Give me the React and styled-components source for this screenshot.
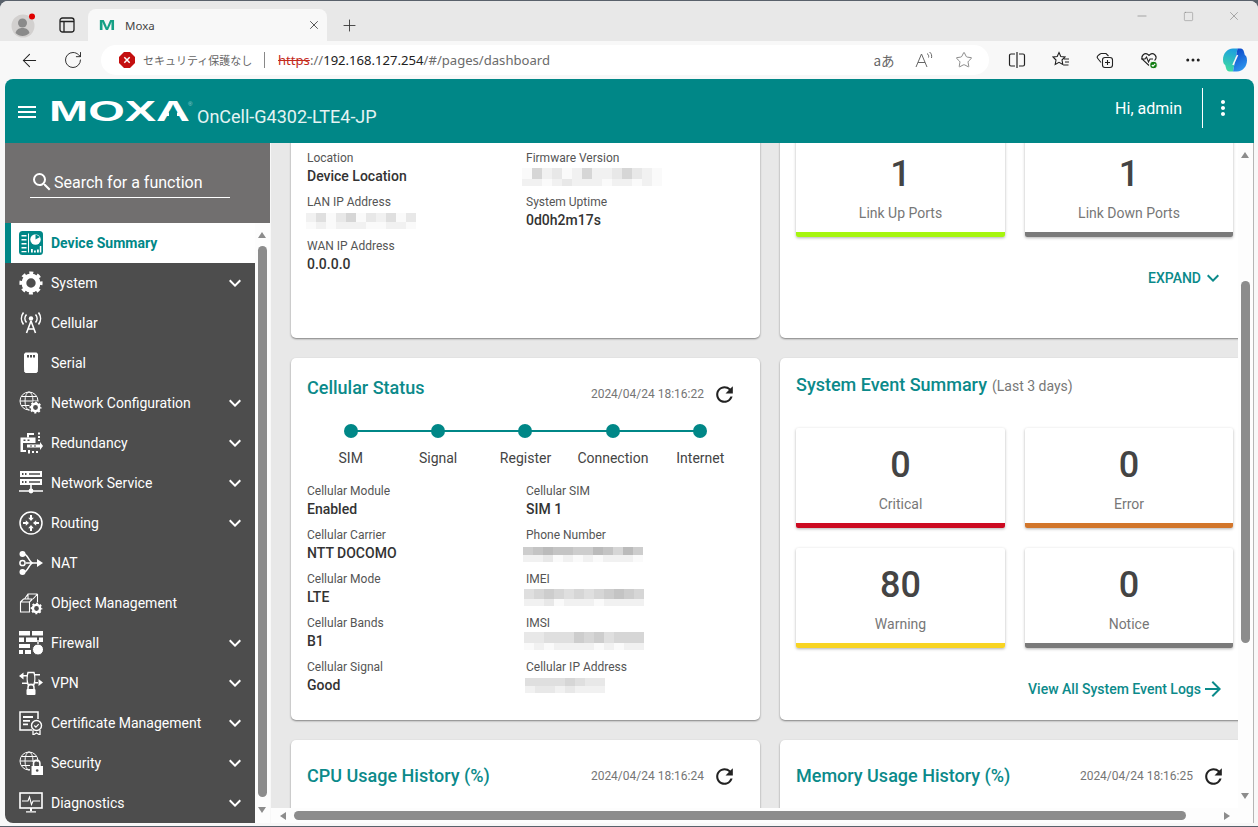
import React from 'react'
import styled, { createGlobalStyle } from 'styled-components'
import { ArrowLeft, RotateCw, Plus, X, Minus, Square, Star, MoreHorizontal } from 'lucide-react'
import { MdMenu, MdMoreVert, MdRefresh, MdSearch, MdExpandMore, MdArrowForward } from 'react-icons/md'

const TEAL = '#008787'
const NAV_BG = '#4d4d4d'

const Global = createGlobalStyle`
    html, body {
        margin: 0;
        height: 100%;
        overflow: hidden;
        background: #59616b;
    }
    body {
        font-family: Roboto, "Noto Sans", sans-serif;
    }
`

const Window = styled.div`
    width: 1258px;
    height: 825px;
    margin-top: 1px;
    background: #f8f8f8;
    border-radius: 8px 8px 0 0;
    display: flex;
    flex-direction: column;
    overflow: hidden;
`

/* browser chrome */
const TabStrip = styled.div`
    height: 40px;
    flex: none;
    background: #e8e8e8;
    display: flex;
    align-items: flex-end;
`
const StripIcon = styled.div`
    width: ${p => p.$w}px;
    height: 32px;
    flex: none;
    display: flex;
    align-items: center;
    justify-content: center;
    color: #222;
`
const Tab = styled.div`
    width: 239px;
    height: 32px;
    flex: none;
    box-sizing: border-box;
    padding: 0 6px 0 10px;
    background: #f8f8f8;
    border-radius: 8px 8px 0 0;
    display: flex;
    align-items: center;
    font: 11.5px "Noto Sans", sans-serif;
    color: #444;
`
const Favicon = styled.span`
    width: 18px;
    margin-right: 9px;
    font: 700 14px/1 "Liberation Sans", sans-serif;
    color: #16a085;
    transform: scaleX(1.45);
    text-align: center;
`
const TabTitle = styled.span`
    flex: 1;
`
const WindowControls = styled.div`
    margin-left: auto;
    align-self: flex-start;
    display: flex;
    height: 30px;
    padding-right: 1px;
`
const ControlButton = styled.div`
    width: 46px;
    display: flex;
    align-items: center;
    justify-content: center;
    color: #777;
`
const Toolbar = styled.div`
    height: 38px;
    flex: none;
    display: flex;
    align-items: center;
    padding-left: 7px;
`
const ToolButton = styled.div`
    width: ${p => p.$w || 44}px;
    height: 30px;
    flex: none;
    display: flex;
    align-items: center;
    justify-content: center;
    color: #222;
`
const AddressBar = styled.div`
    width: 888px;
    height: 30px;
    flex: none;
    box-sizing: border-box;
    margin: 0 6px;
    padding: 0 5px 0 18px;
    background: #fff;
    border-radius: 15px;
    display: flex;
    align-items: center;
    font: 13.1px "Noto Sans", sans-serif;
    color: #6b6b6b;
`
const Warning = styled.span`
    margin-left: 8px;
    width: 110px;
    font: 11px "Noto Sans CJK JP", sans-serif;
    color: #666;
    white-space: nowrap;
`
const Separator = styled.span`
    width: 1px;
    height: 16px;
    margin: 0 13px 0 11px;
    background: #888;
`
const Https = styled.span`
    color: #c42b1c;
    text-decoration: line-through;
`
const Host = styled.span`
    color: #222;
`
const AddressEnd = styled.div`
    margin-left: auto;
    display: flex;
`
const AddressAction = styled.div`
    width: 40px;
    display: flex;
    align-items: center;
    justify-content: center;
    color: #666;
    font: 13.5px "Noto Sans CJK JP", sans-serif;
`

/* moxa page */
const Frame = styled.div`
    flex: 1;
    min-height: 0;
    padding: 0 4px 3px 5px;
    display: flex;
    flex-direction: column;
`
const Header = styled.header`
    height: 64px;
    flex: none;
    background: ${TEAL};
    border-radius: 8px 8px 0 0;
    color: #fff;
    display: flex;
    align-items: center;
    padding-left: 10px;
`
const MenuToggle = styled.div`
    width: 24px;
    height: 24px;
    margin-right: 10px;
    margin-top: 2px;
    font-size: 24px;
    line-height: 24px;
`
const Logo = styled.svg`
    width: 145px;
    height: 34px;
    flex: none;
`
const Product = styled.div`
    margin: 10px 0 0 3px;
    font-size: 18px;
    color: #e4f3f3;
`
const Greeting = styled.div`
    margin-left: auto;
    font-size: 16px;
    margin-top: -6px;
`
const HeaderDivider = styled.div`
    width: 1px;
    height: 40px;
    margin: -6px 8px 0 20px;
    background: #fff;
`
const HeaderMenu = styled.div`
    width: 24px;
    height: 24px;
    margin: -6px 19px 0 0;
    font-size: 24px;
    line-height: 24px;
`
const Body = styled.div`
    flex: 1;
    min-height: 0;
    display: flex;
`
const Sidebar = styled.aside`
    width: 265px;
    flex: none;
    display: flex;
    flex-direction: column;
    border-radius: 0 0 0 8px;
    overflow: hidden;
`
const SearchPanel = styled.div`
    height: 80px;
    flex: none;
    box-sizing: border-box;
    padding: 18px 40px 0 25px;
    background: #716f6f;
`
const SearchBox = styled.div`
    height: 37px;
    box-sizing: border-box;
    padding-top: 6px;
    border-bottom: 1px solid #fff;
    display: flex;
    align-items: center;
    color: #fff;
    font-size: 16px;
    svg {
        width: 24px;
        height: 24px;
        flex: none;
    }
`
const NavArea = styled.div`
    flex: 1;
    min-height: 0;
    display: flex;
    background: #fff;
`
const NavList = styled.nav`
    width: 250px;
    flex: none;
    background: ${NAV_BG};
`
const NavItem = styled.div`
    height: 40px;
    box-sizing: border-box;
    display: flex;
    align-items: center;
    padding: 0 8px 0 14px;
    color: #fff;
    font-size: 14px;
    font-weight: 400;
    &.active {
        background: #fff;
        border-left: 6px solid ${TEAL};
        padding-left: 8px;
        color: ${TEAL};
        font-weight: 700;
    }
`
const NavSvg = styled.svg.attrs({ viewBox: '0 0 24 24' })`
    width: 24px;
    height: 24px;
    flex: none;
    margin-right: 8px;
`
const NavLabel = styled.span`
    flex: 1;
`
const NavChevron = styled(MdExpandMore)`
    width: 24px;
    height: 24px;
    flex: none;
`

const VTrack = styled.div`
    width: ${p => p.$w}px;
    flex: none;
    box-sizing: border-box;
    padding-left: 3px;
    background: #fdfdfd;
    border-right: ${p => p.$edge ? '1px solid #b5b5b5' : '0'};
    display: flex;
    flex-direction: column;
`
const HTrack = styled.div`
    height: 15px;
    flex: none;
    background: #fdfdfd;
    display: flex;
    align-items: center;
    border-right: 1px solid #b5b5b5;
    padding-left: 9px;
`
const VThumb = styled.div`
    width: 9px;
    height: ${p => p.$h}px;
    margin-top: ${p => p.$top}px;
    background: #8c8c8c;
    border-radius: 4.5px;
`
const HThumb = styled.div`
    width: 892px;
    height: 9px;
    margin: 0 38px 0 8px;
    background: #8c8c8c;
    border-radius: 4.5px;
`
const ArrowUp = styled.div`
    width: 0;
    margin-top: 9px;
    border: 4.5px solid transparent;
    border-top: 0;
    border-bottom: 6px solid #8c8c8c;
`
const ArrowDown = styled.div`
    width: 0;
    margin-top: auto;
    margin-bottom: ${p => p.$bottom}px;
    border: 4.5px solid transparent;
    border-bottom: 0;
    border-top: 6px solid #8c8c8c;
`
const ArrowLeftHead = styled.div`
    height: 0;
    border: 4.5px solid transparent;
    border-left: 0;
    border-right: 6px solid #8c8c8c;
`
const ArrowRightHead = styled.div`
    height: 0;
    border: 4.5px solid transparent;
    border-right: 0;
    border-left: 6px solid #8c8c8c;
`

const Main = styled.main`
    flex: 1;
    min-width: 0;
    margin-left: 1px;
    display: flex;
    flex-direction: column;
    background: #e8e8e8;
`
const MainRow = styled.div`
    flex: 1;
    min-height: 0;
    display: flex;
`
const Scroller = styled.div`
    flex: 1;
    min-width: 0;
    overflow: hidden;
`
/* page is scrolled down, so the top of the first row is cut off */
const Grid = styled.div`
    width: 958px;
    margin-top: -105px;
    padding-left: 20px;
    display: grid;
    grid-template-columns: 469px 469px;
    grid-template-rows: 300px 362px 200px;
    gap: 20px;
`
const Card = styled.section`
    background: #fff;
    border-radius: 5px;
    box-shadow: 0 1px 2px rgba(0, 0, 0, 0.45);
`
const CardHead = styled.div`
    display: flex;
    justify-content: space-between;
    align-items: flex-start;
    height: ${p => p.$height}px;
    box-sizing: border-box;
    padding: ${p => p.$top}px 23px 0 16px;
`
const Title = styled.h2`
    margin: 0;
    font-size: 18px;
    font-weight: 500;
    line-height: 24px;
    color: #0b8a8a;
`
const TitleNote = styled.span`
    margin-left: 5px;
    font-size: 14px;
    font-weight: 400;
    color: #777;
`
const Meta = styled.div`
    margin-top: ${p => p.$top}px;
    height: 24px;
    display: flex;
    align-items: center;
    gap: 8px;
    font-size: 12px;
    color: #757575;
    svg {
        width: 25px;
        height: 25px;
        color: #222;
    }
`
const Stepper = styled.div`
    display: grid;
    grid-template-columns: repeat(5, 1fr);
    margin: 18px 16px 14px;
`
const Step = styled.div`
    position: relative;
    display: flex;
    flex-direction: column;
    align-items: center;
    font-size: 14px;
    line-height: 20px;
    color: #444;
    &:not(:last-child)::after {
        content: "";
        position: absolute;
        top: 6px;
        left: 50%;
        width: 100%;
        height: 2px;
        background: ${TEAL};
    }
`
const Dot = styled.div`
    position: relative;
    z-index: 1;
    width: 14px;
    height: 14px;
    margin-bottom: 10px;
    border-radius: 50%;
    background: ${TEAL};
`
const Fields = styled.div`
    display: grid;
    grid-template-columns: 219px 1fr;
    grid-auto-rows: 36px;
    row-gap: 8px;
    padding: ${p => p.$top || 0}px 16px 0;
`
const Label = styled.div`
    font-size: 12px;
    line-height: 18px;
    color: #555;
`
const Value = styled.div`
    font-size: 14px;
    font-weight: 500;
    line-height: 18px;
    color: #333;
`
const Mosaic = styled.div`
    display: grid;
    grid-auto-flow: column;
    grid-auto-columns: ${p => p.$cell || 10}px;
    grid-template-rows: ${p => p.$h - 7}px 7px;
    width: max-content;
    margin: ${p => p.$dy}px 0 0 ${p => p.$dx}px;
    filter: blur(0.5px);
`
const Pixel = styled.i`
    display: block;
`
const Tiles = styled.div`
    display: grid;
    grid-template-columns: 209px 208px;
    gap: 20px;
    padding: ${p => p.$top || 0}px 16px 0;
`
const Tile = styled.div`
    height: 100px;
    box-sizing: border-box;
    border-bottom: 5px solid ${p => p.$color};
    border-radius: 2px;
    box-shadow: 0 1px 3px rgba(0, 0, 0, 0.3);
    text-align: center;
`
const TileCount = styled.div`
    padding-top: 16px;
    font-size: 36px;
    font-weight: 500;
    line-height: 42px;
    color: #444;
`
const TileLabel = styled.div`
    margin-top: 8px;
    font-size: 14px;
    line-height: 20px;
    color: #777;
`
const CardLink = styled.div`
    margin-top: 31px;
    padding-right: 24px;
    display: flex;
    justify-content: flex-end;
    align-items: center;
    height: 20px;
    font-size: 14px;
    font-weight: 500;
    color: #0b8a8a;
    svg {
        width: 24px;
        height: 24px;
        flex: none;
    }
`

const W = { stroke: '#fff', fill: 'none', strokeWidth: 1.4 }

const Gear = ({ cx, cy, r, mask }) => {
    const outer = r * 1.42
    const dash = (2 * Math.PI * outer) / 16
    return (
        <g fill="none" stroke="#fff">
            {mask && <circle cx={cx} cy={cy} r={outer + 1.2} fill={NAV_BG} stroke="none" />}
            <circle cx={cx} cy={cy} r={r} strokeWidth={r * 0.68} />
            <circle cx={cx} cy={cy} r={outer} strokeWidth={r * 0.42} strokeDasharray={`${dash} ${dash}`} strokeDashoffset={dash / 2} />
        </g>
    )
}

const Globe = () => (
    <g {...W} strokeWidth="1">
        <circle cx="10" cy="10" r="9" />
        <ellipse cx="10" cy="10" rx="4" ry="9" />
        <path d="M1 10h18M2.5 5.5h15M2.5 14.5h15" />
    </g>
)

const icons = {
    summary: (
        <>
            <rect x="0" y="0" width="24" height="24" rx="3.5" fill={TEAL} />
            <path d="M2.5 4h5v1.6h-5zM2.5 8h5v1.6h-5zM2.5 12h5v1.6h-5zM2.5 16h5v1.6h-5zM2.5 20h5v1.2h-5z" fill="#fff" />
            <path d="M9.5 2.5v19" stroke="#fff" strokeWidth="1" />
            <circle cx="16.500" cy="8.500" r="5.200" fill="#fff" />
            <path d="M16.500 8.500V3.300l4.500 2.600z" fill={TEAL} />
            <path d="M12 18h1.800v3.500H12zM15 19.500h1.800v2H15zM18 18.500h1.800v3H18zM20.800 15h1.500v6.500h-1.500z" fill="#fff" />
        </>
    ),
    system: <Gear cx={12} cy={12} r={7.1} />,
    cellular: (
        <g {...W} strokeWidth="1.6">
            <path d="M12 10 7.5 22M12 10l4.500 12M9.300 18h5.400" />
            <circle cx="12" cy="7.500" r="2.200" fill="#fff" stroke="none" />
            <path d="M7.500 3.500a6 6 0 0 0 0 8M4.500 1.500a10 10 0 0 0 0 12M16.500 3.500a6 6 0 0 1 0 8M19.500 1.500a10 10 0 0 1 0 12" />
        </g>
    ),
    serial: (
        <>
            <path d="M6.500 1.500h11L19 3v13l-.2 4.500-1.300 1.500h-11l-1.300-1.500L5 16V3z" fill="#fff" />
            <path d="M8 4h2v2.500H8zM11 4h2v2.500h-2zM14 4h2v2.500h-2z" fill={NAV_BG} />
        </>
    ),
    network: (
        <>
            <Globe />
            <Gear cx={16.5} cy={16.5} r={3.7} mask />
        </>
    ),
    redundancy: (
        <g fill="#fff" stroke="none">
            <path d="M1.500 6.500h15v5.500H4v7h3v2H1.500z" />
            <path d="M8 2h7v2H10v2.500H8z" />
            <path d="M4.500 8.500h2v1.500h-2zM8.500 8.500h2v1.500h-2z" fill={NAV_BG} />
            <path d="M8 13.500h13V11l3 4-3 4v-2.500H8z" />
            <path d="M19 1.500h2v2h-2zM19 5h2v2h-2zM19 8.500h2v1.500h-2zM9 19h2v3.500H9zM13 20h2v2h-2zM17 20h2v2h-2z" />
            <path d="M11 14.500h2v1h-2zM15 14.500h2v1h-2z" fill={NAV_BG} />
        </g>
    ),
    service: (
        <g fill="#fff">
            <path fillRule="evenodd" d="M1 0h22v6H1zM3 2v2h1.500V2zM6 2v2h1.500V2zM10 2.200v1.600h11V2.200z" />
            <path fillRule="evenodd" d="M1 8h22v6H1zM3 10v2h1.500v-2zM6 10v2h1.500v-2zM10 10.200v1.600h11v-1.600z" />
            <path d="M11.200 14h1.600v4h-1.600zM0 19.200h24v1.600H0z" />
            <circle cx="12" cy="20" r="2.400" />
        </g>
    ),
    routing: (
        <g>
            <circle cx="12" cy="12" r="11" {...W} strokeWidth="1.5" />
            <path fill="#fff" d="M12 10 9.200 6.800h1.800V4h2v2.800h1.800zM12 14l2.800 3.200H13V20h-2v-2.800H9.200zM10 12l-3.200 2.800V13H4v-2h2.800V9.200zM14 12l3.200-2.800V11H20v2h-2.800v1.800z" />
        </g>
    ),
    nat: (
        <g>
            <path d="M4 2.500c5 0 6 9.500 10 9.500M4 21.500c5 0 6-9.500 10-9.500M7 12h12" {...W} strokeWidth="1.5" />
            <circle cx="3.500" cy="3" r="3" fill="#fff" />
            <circle cx="3.500" cy="21" r="3" fill="#fff" />
            <circle cx="3.500" cy="12" r="2.600" {...W} strokeWidth="1.5" />
            <path d="M18 8l6 4-6 4z" fill="#fff" />
        </g>
    ),
    object: (
        <>
            <g {...W} strokeWidth="1.1">
                <path d="M1.500 11h9v10h-9zM1.500 11l3-3h9M10.500 11l3-3M5.500 8 9 3h9.500M14 8l4.500-5M18.500 3v9M9 3v5" />
            </g>
            <Gear cx={17.5} cy={17.5} r={3.6} mask />
        </>
    ),
    firewall: (
        <g fill="#fff">
            <path d="M0 0h11v4.500H0zM13 0h11v4.500H13zM0 6.500h5v4.500H0zM7 6.500h11v4.500H7zM20 6.500h4v4.500h-4zM0 13h11v4H0zM0 19h4v4H0zM6 19h6v4H6z" />
            <circle cx="19" cy="18.500" r="5.500" stroke={NAV_BG} strokeWidth="1" />
            <path d="M19 9v4" stroke="#fff" strokeWidth="1.400" />
        </g>
    ),
    vpn: (
        <g fill="#fff">
            <path d="M0 5l4.500-3.500v7zM24 11.500l-4.500-3.500v7zM4 4h5v1.500H4zM16 11h4v1.500h-4zM15 3h6v1.500h-6z" />
            <path d="M9 1.500h6c1 3 1 9 0 12H9c-1-3-1-9 0-12z" {...W} />
            <path d="M3 11.500h6V13H3z" />
            <path d="M9 19v-2.500a3 3 0 0 1 6 0V19" {...W} strokeWidth="1.500" />
            <rect x="7.500" y="18" width="9" height="6" rx="1" />
        </g>
    ),
    cert: (
        <>
            <path d="M13 19H1V1h18v7" {...W} strokeWidth="1.500" />
            <path d="M4 5h10v2H4zM4 9h7v1.800H4zM4 12.500h5v1.800H4z" fill="#fff" />
            <circle cx="17.500" cy="14.500" r="5" {...W} strokeWidth="1.400" />
            <path d="M15.300 14.500l1.600 1.600 2.800-3" {...W} strokeWidth="1.200" />
            <path d="M14 19v5l3.500-2 3.500 2v-5" {...W} strokeWidth="1.300" />
        </>
    ),
    security: (
        <>
            <Globe />
            <rect x="11" y="11" width="13" height="13" fill={NAV_BG} />
            <path d="M14.500 15v-2.500a3.200 3.200 0 0 1 6.400 0V15" {...W} strokeWidth="1.600" />
            <path d="M12.500 15h11.500v9H12.500z" fill="#fff" />
            <circle cx="18.200" cy="19.500" r="1.300" fill={NAV_BG} />
        </>
    ),
    diagnostics: (
        <g>
            <rect x="1" y="2" width="22" height="15" {...W} strokeWidth="1.600" />
            <path d="M3 10h6l1.500-4 2 7.500 1.500-3.500h7" {...W} strokeWidth="1.100" />
            <path d="M11 17h2v3h-2zM7 20.200h10v1.400H7z" fill="#fff" />
        </g>
    ),
}

const navItems = [
    { label: 'Device Summary', icon: 'summary', active: true },
    { label: 'System', icon: 'system', more: true },
    { label: 'Cellular', icon: 'cellular' },
    { label: 'Serial', icon: 'serial' },
    { label: 'Network Configuration', icon: 'network', more: true },
    { label: 'Redundancy', icon: 'redundancy', more: true },
    { label: 'Network Service', icon: 'service', more: true },
    { label: 'Routing', icon: 'routing', more: true },
    { label: 'NAT', icon: 'nat' },
    { label: 'Object Management', icon: 'object' },
    { label: 'Firewall', icon: 'firewall', more: true },
    { label: 'VPN', icon: 'vpn', more: true },
    { label: 'Certificate Management', icon: 'cert', more: true },
    { label: 'Security', icon: 'security', more: true },
    { label: 'Diagnostics', icon: 'diagnostics', more: true },
]

// redacted values in the screenshot: one digit per 10px cell, top row then bottom row
const Blur = ({ top, bottom, h, dx, dy }) => {
    const shade = d => {
        const v = 250 - Number(d) * 9
        return `rgb(${v},${v},${v})`
    }
    return (
        <Mosaic $h={h} $dx={dx} $dy={dy}>
            {top.split('').map((d, i) => (
                <React.Fragment key={i}>
                    <Pixel style={{ background: shade(d) }} />
                    <Pixel style={{ background: shade(bottom[i]) }} />
                </React.Fragment>
            ))}
        </Mosaic>
    )
}

const Field = ({ label, value, blur }) => (
    <div>
        <Label>{label}</Label>
        {blur ? <Blur {...blur} /> : <Value>{value}</Value>}
    </div>
)

const Timestamp = ({ time, top }) => (
    <Meta $top={top}>
        {time}
        <MdRefresh />
    </Meta>
)

const steps = ['SIM', 'Signal', 'Register', 'Connection', 'Internet']

const Copilot = () => (
    <svg width="24" height="24" viewBox="0 0 24 24">
        <defs>
            <linearGradient id="cpA" x1="0.6" y1="0" x2="0.4" y2="1">
                <stop offset="0" stopColor="#1c9fe0" />
                <stop offset="1" stopColor="#3fdca0" />
            </linearGradient>
            <linearGradient id="cpB" x1="0.3" y1="0" x2="0.7" y2="1">
                <stop offset="0" stopColor="#0b46c8" />
                <stop offset="1" stopColor="#2f9bf0" />
            </linearGradient>
        </defs>
        <path d="M10 23.500H6.500c-2 0-3-1.500-3.500-3.500l-.8-3C.8 16.500 0 14.500 0 11.500 0 6 4 .5 10 .5h4.500z" fill="url(#cpA)" />
        <path d="M14.500 .5h3c2 0 3 1.500 3.500 3.500l.8 3c1.400.5 2.200 2.500 2.200 5.500 0 5.500-4 11-10 11H10z" fill="url(#cpB)" />
        <path d="M14.500 7 10 17" stroke="#f8f8f8" strokeWidth="1.600" />
    </svg>
)

const App = () => (
    <>
        <Global />
        <Window>
            <TabStrip>
                <StripIcon $w={46}>
                    <svg width="26" height="26" viewBox="0 0 26 26" style={{ marginLeft: 1 }}>
                        <circle cx="12" cy="14" r="11.500" fill="#d2d0cf" />
                        <circle cx="11.500" cy="11" r="4.500" fill="#8a8a8a" />
                        <path d="M4.500 21c1-4 4-5 7-5s6 1 7 5c-2 2-4.500 3-7 3s-5-1-7-3z" fill="#8a8a8a" />
                        <circle cx="21" cy="4.500" r="3" fill="#e00000" />
                    </svg>
                </StripIcon>
                <StripIcon $w={42}>
                    <svg width="16" height="16" viewBox="0 0 16 16" fill="none" stroke="#222" strokeWidth="1.300">
                        <rect x="1" y="1" width="14" height="14" rx="2.500" />
                        <path d="M1 4.500h14M5 4.500V15" />
                    </svg>
                </StripIcon>
                <Tab>
                    <Favicon>M</Favicon>
                    <TabTitle>Moxa</TabTitle>
                    <X size={14} strokeWidth={1.4} color="#333" />
                </Tab>
                <StripIcon $w={44}>
                    <Plus size={19} strokeWidth={1.1} color="#333" />
                </StripIcon>
                <WindowControls>
                    <ControlButton><Minus size={14} strokeWidth={1} /></ControlButton>
                    <ControlButton><Square size={11} strokeWidth={1} /></ControlButton>
                    <ControlButton><X size={14} strokeWidth={1} /></ControlButton>
                </WindowControls>
            </TabStrip>
            <Toolbar>
                <ToolButton><ArrowLeft size={21} strokeWidth={1.2} /></ToolButton>
                <ToolButton><RotateCw size={20} strokeWidth={1.1} /></ToolButton>
                <AddressBar>
                    <svg width="16" height="16" viewBox="0 0 16 16">
                        <path d="M5 0h6l5 5v6l-5 5H5l-5-5V5z" fill="#c40f0f" />
                        <path d="M5.300 5.300l5.400 5.400M10.700 5.300l-5.400 5.400" stroke="#fff" strokeWidth="1.500" />
                    </svg>
                    <Warning>セキュリティ保護なし</Warning>
                    <Separator />
                    <Https>https</Https>://<Host>192.168.127.254</Host>/#/pages/dashboard
                    <AddressEnd>
                        <AddressAction>aあ</AddressAction>
                        <AddressAction>
                            <svg width="20" height="20" viewBox="0 0 20 20" fill="none" stroke="#666" strokeWidth="1">
                                <path d="M2 17 7.500 4 13 17M4 12.500h7M13 3.500c1.500 1 2 2.500 1.500 4M15.500 2c2 1.500 2.500 3.500 2 6" />
                            </svg>
                        </AddressAction>
                        <AddressAction><Star size={18} strokeWidth={1} /></AddressAction>
                    </AddressEnd>
                </AddressBar>
                <ToolButton>
                    <svg width="18" height="18" viewBox="0 0 18 18" fill="none" stroke="#222" strokeWidth="1.200">
                        <path d="M7 3H3a1.500 1.500 0 0 0-1.500 1.500v9A1.500 1.500 0 0 0 3 15h4M11 3h4a1.500 1.500 0 0 1 1.500 1.500v9A1.500 1.500 0 0 1 15 15h-4M9 1v16" />
                    </svg>
                </ToolButton>
                <ToolButton>
                    <svg width="18" height="18" viewBox="0 0 18 18" fill="none" stroke="#222" strokeWidth="1.100">
                        <path d="M7 1.500l1.800 4 4.200.5-3 3 .8 4.500L7 11.300 3.200 13.500 4 9 1 6l4.200-.5zM12 8h5M13 11h4M11.500 14h5" />
                    </svg>
                </ToolButton>
                <ToolButton>
                    <svg width="18" height="18" viewBox="0 0 18 18" fill="none" stroke="#222" strokeWidth="1.100">
                        <path d="M5 11.500 1.800 7.500A2 2 0 0 1 2 4.700L4 3a2 2 0 0 1 1.500-.5H10l2.500 2.500" />
                        <rect x="6.500" y="6.500" width="10" height="10" rx="2.500" />
                        <path d="M11.500 9v5M9 11.500h5" />
                    </svg>
                </ToolButton>
                <ToolButton>
                    <svg width="18" height="18" viewBox="0 0 18 18" fill="none" stroke="#222" strokeWidth="1.100">
                        <path d="M9 14.500 2.500 8.500a3.800 3.800 0 0 1 5.500-5l1 1 1-1a3.800 3.800 0 0 1 5.500 5l-1 1M1 8h4l1.500-2 2 5 1.500-3h3" />
                        <circle cx="13.500" cy="14" r="3.800" fill="#107c10" stroke="#f8f8f8" />
                        <path d="M11.800 14l1.200 1.200 2.200-2.400" stroke="#fff" />
                    </svg>
                </ToolButton>
                <ToolButton><MoreHorizontal size={18} strokeWidth={2} /></ToolButton>
                <ToolButton $w={40}><Copilot /></ToolButton>
            </Toolbar>
            <Frame>
                <Header>
                    <MenuToggle><MdMenu /></MenuToggle>
                    <Logo viewBox="0 0 145 34">
                        <text x="0" y="27" fontFamily="Liberation Sans" fontWeight="700" fontSize="29" fill="#fff" textLength="141" lengthAdjust="spacingAndGlyphs">MOXA</text>
                        <rect x="120" y="17.500" width="8" height="5.500" fill={TEAL} />
                        <text x="139" y="12" fontFamily="Liberation Sans" fontSize="6" fill="#9fd0d0">®</text>
                    </Logo>
                    <Product>OnCell-G4302-LTE4-JP</Product>
                    <Greeting>Hi, admin</Greeting>
                    <HeaderDivider />
                    <HeaderMenu><MdMoreVert /></HeaderMenu>
                </Header>
                <Body>
                    <Sidebar>
                        <SearchPanel>
                            <SearchBox>
                                <MdSearch />
                                Search for a function
                            </SearchBox>
                        </SearchPanel>
                        <NavArea>
                            <NavList>
                                {navItems.map(item => (
                                    <NavItem key={item.label} className={item.active ? 'active' : ''}>
                                        <NavSvg>{icons[item.icon]}</NavSvg>
                                        <NavLabel>{item.label}</NavLabel>
                                        {item.more && <NavChevron />}
                                    </NavItem>
                                ))}
                            </NavList>
                            <VTrack $w={15}>
                                <ArrowUp />
                                <VThumb $top={8} $h={551} />
                                <ArrowDown $bottom={10} />
                            </VTrack>
                        </NavArea>
                    </Sidebar>
                    <Main>
                        <MainRow>
                            <Scroller>
                                <Grid>
                                    <Card>
                                        <Fields $top={111}>
                                            <Field label="Location" value="Device Location" />
                                            <Field label="Firmware Version" blur={{ top: '04120141124210', bottom: '11012111011010', h: 18, dx: -4, dy: 1 }} />
                                            <Field label="LAN IP Address" blur={{ top: '13024021302', bottom: '01011100110', h: 16, dx: -1, dy: 2 }} />
                                            <Field label="System Uptime" value="0d0h2m17s" />
                                            <Field label="WAN IP Address" value="0.0.0.0" />
                                        </Fields>
                                    </Card>
                                    <Card>
                                        <Tiles $top={99}>
                                            <Tile $color="#a6f50f">
                                                <TileCount>1</TileCount>
                                                <TileLabel>Link Up Ports</TileLabel>
                                            </Tile>
                                            <Tile $color="#7a7a7a">
                                                <TileCount>1</TileCount>
                                                <TileLabel>Link Down Ports</TileLabel>
                                            </Tile>
                                        </Tiles>
                                        <CardLink>EXPAND<MdExpandMore /></CardLink>
                                    </Card>
                                    <Card>
                                        <CardHead $top={18} $height={48}>
                                            <Title>Cellular Status</Title>
                                            <Timestamp time="2024/04/24 18:16:22" top={6} />
                                        </CardHead>
                                        <Stepper>
                                            {steps.map(s => (
                                                <Step key={s}>
                                                    <Dot />
                                                    {s}
                                                </Step>
                                            ))}
                                        </Stepper>
                                        <Fields>
                                            <Field label="Cellular Module" value="Enabled" />
                                            <Field label="Cellular SIM" value="SIM 1" />
                                            <Field label="Cellular Carrier" value="NTT DOCOMO" />
                                            <Field label="Phone Number" blur={{ top: '567665576475', bottom: '112010101110', h: 15, dx: -3, dy: 3 }} />
                                            <Field label="Cellular Mode" value="LTE" />
                                            <Field label="IMEI" blur={{ top: '345434345654', bottom: '112011101111', h: 17, dx: -2, dy: 1 }} />
                                            <Field label="Cellular Bands" value="B1" />
                                            <Field label="IMSI" blur={{ top: '223335453444', bottom: '010111101011', h: 18, dx: -2, dy: 0 }} />
                                            <Field label="Cellular Signal" value="Good" />
                                            <Field label="Cellular IP Address" blur={{ top: '33334322', bottom: '12212111', h: 15, dx: -1, dy: 2 }} />
                                        </Fields>
                                    </Card>
                                    <Card>
                                        <CardHead $top={15} $height={39}>
                                            <Title>
                                                System Event Summary
                                                <TitleNote>(Last 3 days)</TitleNote>
                                            </Title>
                                        </CardHead>
                                        <Tiles $top={31}>
                                            <Tile $color="#cc0a21">
                                                <TileCount>0</TileCount>
                                                <TileLabel>Critical</TileLabel>
                                            </Tile>
                                            <Tile $color="#d2762b">
                                                <TileCount>0</TileCount>
                                                <TileLabel>Error</TileLabel>
                                            </Tile>
                                            <Tile $color="#f8d422">
                                                <TileCount>80</TileCount>
                                                <TileLabel>Warning</TileLabel>
                                            </Tile>
                                            <Tile $color="#7a7a7a">
                                                <TileCount>0</TileCount>
                                                <TileLabel>Notice</TileLabel>
                                            </Tile>
                                        </Tiles>
                                        <CardLink>View All System Event Logs<MdArrowForward /></CardLink>
                                    </Card>
                                    <Card>
                                        <CardHead $top={24} $height={60}>
                                            <Title>CPU Usage History (%)</Title>
                                            <Timestamp time="2024/04/24 18:16:24" top={0} />
                                        </CardHead>
                                    </Card>
                                    <Card>
                                        <CardHead $top={24} $height={60}>
                                            <Title>Memory Usage History (%)</Title>
                                            <Timestamp time="2024/04/24 18:16:25" top={0} />
                                        </CardHead>
                                    </Card>
                                </Grid>
                            </Scroller>
                            <VTrack $w={16} $edge>
                                <ArrowUp />
                                <VThumb $top={123} $h={362} />
                                <ArrowDown $bottom={9} />
                            </VTrack>
                        </MainRow>
                        <HTrack>
                            <ArrowLeftHead />
                            <HThumb />
                            <ArrowRightHead />
                        </HTrack>
                    </Main>
                </Body>
            </Frame>
        </Window>
    </>
)

export default App
